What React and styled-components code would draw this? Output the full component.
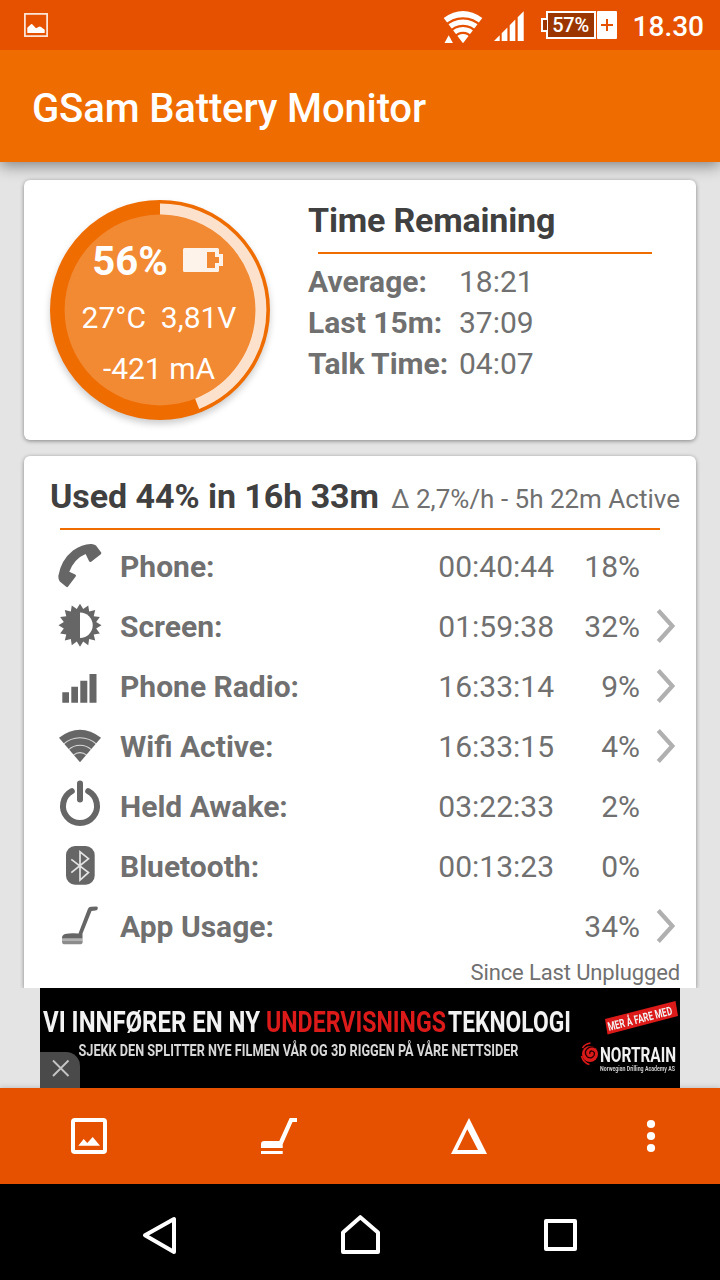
/* eslint-disable react/prop-types */
import React from 'react'
import styled, { createGlobalStyle } from 'styled-components'

const GlobalStyle = createGlobalStyle`
  * {
    box-sizing: border-box;
  }
  body {
    margin: 0;
    background-color: #e4e4e4;
    font-family: Roboto, sans-serif;
  }
`

const Screen = styled.div`
  display: flex;
  flex-direction: column;
  width: 720px;
  height: 1280px;
  overflow: hidden;
`

const StatusBar = styled.header`
  display: flex;
  align-items: center;
  flex: none;
  height: 50px;
  padding: 0 16px 0 24px;
  background-color: #e65100;
  position: relative;
  z-index: 1;
`

const StatusIcons = styled.div`
  display: flex;
  align-items: center;
  margin-left: auto;
`

const BatteryBadge = styled.div`
  display: flex;
  align-items: center;
  height: 28px;
  margin-left: 17px;
`

const BatteryNub = styled.span`
  width: 6px;
  height: 14px;
  margin-right: -1px;
  border: 2px solid #fff;
  border-right: none;
  background-color: #9c3600;
  z-index: 1;
`

const BatteryLevel = styled.span`
  width: 50px;
  height: 28px;
  border: 2px solid #fff;
  background-color: #9c3600;
  color: #fff;
  font-size: 20px;
  font-weight: 500;
  line-height: 25px;
  text-align: center;
  letter-spacing: -0.3px;
`

const BatteryPlus = styled.span`
  display: flex;
  align-items: center;
  justify-content: center;
  width: 20px;
  height: 28px;
  margin-left: 1px;
  border-radius: 1px;
  background-color: #fff;
`

const Clock = styled.span`
  margin-left: 16px;
  padding-top: 3px;
  color: #fff;
  font-size: 28px;
  font-weight: 500;
  line-height: 50px;
`

const AppBar = styled.div`
  flex: none;
  height: 112px;
  padding: 3px 32px 0;
  background-color: #ef6c00;
  box-shadow: 0 4px 14px rgba(0, 0, 0, 0.42);
`

const AppTitle = styled.h1`
  margin: 0;
  color: #fff;
  font-size: 40px;
  font-weight: 500;
  line-height: 112px;
  letter-spacing: -0.13px;
`

const Content = styled.main`
  display: flex;
  flex-direction: column;
  flex: none;
  gap: 16px;
  height: 826px;
  padding: 18px 24px 0;
`

const Card = styled.section`
  flex: none;
  border-radius: 6px;
  background-color: #fff;
  box-shadow: 0 1px 4px rgba(0, 0, 0, 0.42);
`

const SummaryCard = styled(Card)`
  display: flex;
  height: 260px;
  padding: 20px 26px;
`

const UsageCard = styled(Card)`
  height: 532px;
  padding-top: 14px;
  border-radius: 6px 6px 0 0;
  clip-path: inset(-4px -4px 0 -4px);
`

const Gauge = styled.div`
  display: grid;
  flex: none;
  width: 220px;
  height: 220px;
  border-radius: 50%;
  background-color: #ef6c00;
  box-shadow: 0 4px 7px rgba(0, 0, 0, 0.2);

  > * {
    grid-area: 1 / 1;
  }
`

const GaugeText = styled.div`
  display: flex;
  flex-direction: column;
  align-items: center;
  padding: 34px 2px 0 0;
  color: #fff;
  font-size: 30px;
  line-height: 51px;
  white-space: pre;
`

const GaugeLevel = styled.div`
  display: flex;
  align-items: center;
  gap: 15px;
  height: 56px;
  margin: -1px 0 3px -3px;
  font-size: 40px;
  font-weight: 700;

  svg {
    margin-top: -2px;
  }
`

const TimeRemaining = styled.div`
  margin-left: 38px;
  width: 344px;
`

const Heading = styled.h2`
  margin: 0;
  color: #404040;
  font-size: 34px;
  font-weight: 700;
  line-height: 40px;
  letter-spacing: ${(props) => props.$tracking || 'normal'};
`

const Rule = styled.div`
  height: 2px;
  margin: ${(props) => props.$margin};
  background-color: #ef6c00;
`

const Estimates = styled.dl`
  display: grid;
  grid-template-columns: 151px auto;
  margin: 7px 0 0;
  color: #707070;
  font-size: 30px;
  line-height: 41px;

  dt {
    font-weight: 700;
    white-space: nowrap;
  }
  dd {
    margin: 0;
  }
`

const UsageHeader = styled.div`
  display: flex;
  align-items: baseline;
  justify-content: space-between;
  height: 58px;
  padding: 6px 16px 0 26px;
  white-space: nowrap;
`

const UsageRate = styled.span`
  color: #707070;
  font-size: 26px;
`

const UsageRow = styled.div`
  display: grid;
  grid-template-columns: 64px 1fr 130px 86px 56px;
  align-items: center;
  height: 60px;
  padding-left: 32px;
  color: #707070;
  font-size: 30px;
  line-height: 58px;

  svg {
    display: block;
  }
  span {
    padding-top: 2px;
  }
`

const RowLabel = styled.span`
  font-weight: 700;
`

const RowValue = styled.span`
  min-height: 60px;
  text-align: right;
`

const Since = styled.div`
  padding: 1px 16px 0 0;
  color: #707070;
  font-size: 22px;
  letter-spacing: -0.13px;
  line-height: 32px;
  text-align: right;
`

const Banner = styled.aside`
  position: relative;
  flex: none;
  width: 640px;
  height: 100px;
  margin: 0 40px;
  background-color: #000;

  svg {
    display: block;
  }
`

const BannerClose = styled.button`
  position: absolute;
  left: 0;
  bottom: 0;
  width: 40px;
  height: 36px;
  padding: 0;
  border: none;
  border-radius: 0 14px 0 0;
  background-color: #4a4a4a;
`

const Toolbar = styled.nav`
  display: flex;
  align-items: center;
  flex: none;
  gap: 154px;
  height: 96px;
  padding-left: 71px;
  background-color: #e65100;
  box-shadow: 0 0 6px rgba(0, 0, 0, 0.2);
`

const NavBar = styled.nav`
  display: flex;
  align-items: center;
  flex: none;
  gap: 160px;
  height: 96px;
  padding: 6px 0 0 140px;
  background-color: #000;
`

const PictureStatusIcon = () => (
  <svg width="24" height="24" viewBox="0 0 24 24">
    <rect x="0.9" y="0.9" width="22.2" height="22.2" fill="none" stroke="#fff" strokeWidth="1.7" opacity="0.88" />
    <path d="M3.3 14.7 7 11.3q.8-.5 1.5.3L12 15.3l3-1.5q1-.5 2 .3l3.7 2.6V20H3.3z" fill="#fff" />
  </svg>
)

const WifiStatusIcon = () => (
  <svg width="40" height="38" viewBox="0 -4 40 38">
    <path d="M20 33.3.7 7.9Q20-6 39.3 7.9z" fill="#fff" />
    <g fill="none" stroke="#e65100" strokeWidth="2.3">
      <path d="M1.8 16.2a25 25 0 0 1 36.4 0" />
      <path d="M6.400 22.400a17.500 17.500 0 0 1 27.200 0" />
      <path d="M11.600 27.200a10.200 10.200 0 0 1 16.800 0" />
    </g>
    <path d="M5.700 25.200 1.500 33h8.400z" fill="#fff" stroke="#e65100" strokeWidth="3" paintOrder="stroke" />
  </svg>
)

const SignalStatusIcon = styled.svg.attrs({
  viewBox: '0 -2 30 32',
  children: (
    <path d="M0 30 5.7 24.3V30zM7.7 30v-7.7l5.7-5.7V30zM15.7 30V14.3l5.6-5.7V30zM23.7 30V6.3L29.7.3V30z" fill="#fff" />
  )
})`
  width: 30px;
  height: 32px;
  margin-left: 11px;
`

const GaugeRing = () => (
  <svg width="220" height="220" viewBox="0 0 220 220">
    <circle cx="110" cy="110" r="95.4" fill="#f28933" />
    <circle
      cx="110"
      cy="110"
      r="100.9"
      fill="none"
      stroke="#fce2cc"
      strokeWidth="11"
      pathLength="100"
      strokeDasharray="44 56"
      transform="rotate(-90 110 110)"
    />
  </svg>
)

const GaugeBattery = () => (
  <svg width="40" height="24" viewBox="0 0 40 24">
    <path
      d="M1.5 0H34.5Q36 0 36 1.5V6h4v12h-4v4.5Q36 24 34.5 24H1.5Q0 24 0 22.5V1.5Q0 0 1.5 0zM24 4v16h8v-5h4V9h-4V4z"
      fill="#fff"
      fillRule="evenodd"
      opacity="0.9"
    />
  </svg>
)

// 16 pointed sun outline
const sunPoints = Array.from({ length: 32 }, (_, i) => {
  const r = i % 2 === 0 ? 21.5 : 16.5
  const a = (i * Math.PI) / 16
  return `${(24 + r * Math.sin(a)).toFixed(2)},${(29.3 - r * Math.cos(a)).toFixed(2)}`
}).join(' ')

const icons = {
  phone: (
    <path d="M34.7 8q3.300-.2 5.300 1.600l5.200 7q.5.9-.4 1.600l-9.600 7.500q-1.200.8-2.100-.5L29.600 18Q18.500 22.500 13.300 35.700l5.900 2.700q1.400.8.500 2.200l-7.600 10q-.8 1-1.900.2L3.800 45.600Q2.200 44 2.300 40 5 24 17 14.500 26 8.300 34.700 8z" />
  ),
  screen: (
    <>
      <polygon points={sunPoints} />
      <path d="M24 16.600a12.700 12.700 0 0 1 0 25.400z" fill="#fff" />
    </>
  ),
  radio: (
    <path d="M6.300 36.300H13v10.400H6.300zM15.300 30.700H22v16h-6.700zM24.300 24.700h7v22h-7zM33.500 18h7v28.700h-7z" />
  ),
  wifi: (
    <>
      <path d="M24 46.300 3 21.700Q24 5.800 45 21.700z" />
      <g fill="none" stroke="#fff" strokeWidth="1.100" opacity="0.75">
        <path d="M7.500 28.100a24.500 24.500 0 0 1 33 0" />
        <path d="M12.600 33.700a17 17 0 0 1 22.800 0" />
        <path d="M17.500 39.100a9.700 9.700 0 0 1 13 0" />
      </g>
    </>
  ),
  power: (
    <g fill="none" stroke="#666" strokeWidth="6" strokeLinecap="round">
      <path d="M15.800 15.200a17 17 0 1 0 16.400 0" />
      <path d="M24 7.500v16" />
    </g>
  ),
  bluetooth: (
    <>
      <rect x="10" y="10" width="28.700" height="38.700" rx="9" />
      <path d="M15.300 36.700 32.500 22.700 24 15.800V44.200L32.500 36.500 15.300 23.300" fill="none" stroke="#e4e4e4" strokeWidth="1.700" />
    </>
  ),
  apps: (
    <>
      <path d="M22.300 38 32 12.800q.8-2 3-2.100l5.500-.2q1.600 0 1.300 1.800-.2 2.200-2.300 2.300l-4 .3L26.500 37.500V42.500H6q-.3-3.500 3-4.500 6-1.300 13.300-.5z" />
      <path d="M6 42.500h20.700V45H6z" opacity="0.5" />
      <path d="M6 45h20.700q0 3.300-2 3.300H8q-2 0-2-3.300z" opacity="0.75" />
    </>
  )
}

const Chevron = () => (
  <svg width="56" height="60" viewBox="0 0 56 60">
    <path d="M18.300 14.500 32.300 30 18.300 45.500" fill="none" stroke="#b0b0b0" strokeWidth="4.300" />
  </svg>
)

const rows = [
  { icon: 'phone', label: 'Phone:', time: '00:40:44', percent: '18%' },
  { icon: 'screen', label: 'Screen:', time: '01:59:38', percent: '32%', link: true },
  { icon: 'radio', label: 'Phone Radio:', time: '16:33:14', percent: '9%', link: true },
  { icon: 'wifi', label: 'Wifi Active:', time: '16:33:15', percent: '4%', link: true },
  { icon: 'power', label: 'Held Awake:', time: '03:22:33', percent: '2%' },
  { icon: 'bluetooth', label: 'Bluetooth:', time: '00:13:23', percent: '0%' },
  { icon: 'apps', label: 'App Usage:', time: '', percent: '34%', link: true }
]

function UsageItem ({ icon, label, time, percent, link }) {
  return (
    <UsageRow>
      <svg width="48" height="60" viewBox="0 0 48 60" fill="#666">{icons[icon]}</svg>
      <RowLabel>{label}</RowLabel>
      <RowValue>{time}</RowValue>
      <RowValue>{percent}</RowValue>
      {link && <Chevron />}
    </UsageRow>
  )
}

function AdBanner () {
  return (
    <Banner>
      <svg width="640" height="100" viewBox="0 0 640 100" fontFamily="Roboto, sans-serif" fontWeight="700">
        <g filter="blur(0.5px)" fill="#f2f2f2">
          <g fontSize="30">
            <text x="3" y="44" textLength="217" lengthAdjust="spacingAndGlyphs">VI INNFØRER EN NY</text>
            <text x="226" y="44" textLength="180" lengthAdjust="spacingAndGlyphs" fill="#dc1a1a">UNDERVISNINGS</text>
            <text x="408" y="44" textLength="123" lengthAdjust="spacingAndGlyphs">TEKNOLOGI</text>
          </g>
          <text x="38.500" y="68" fontSize="16.500" textLength="440" lengthAdjust="spacingAndGlyphs" fill="#d8d8d8">
            SJEKK DEN SPLITTER NYE FILMEN VÅR OG 3D RIGGEN PÅ VÅRE NETTSIDER
          </text>
          <path d="M565 31 635.500 13 638 28 567.500 46.500z" fill="#dc1a1a" />
          <text x="569" y="43" fontSize="12" textLength="66" lengthAdjust="spacingAndGlyphs" transform="rotate(-14.500 569 43)">
            MER Å FARE MED
          </text>
          <circle cx="550" cy="66" r="8" fill="#dc1a1a" />
          <path d="M550 66q-1-3 2-3 3.500 1 2 4.500-2.500 4-6.500 1.500-4-4-.5-8 4-3.500 8.500-1" fill="none" stroke="#200" strokeWidth="1.300" />
          <path d="M542.500 60q2-4 8-5M541.500 68q2 7 8 8.500" fill="none" stroke="#dc1a1a" strokeWidth="1.600" />
          <text x="560" y="73.500" fontSize="20" textLength="76" lengthAdjust="spacingAndGlyphs">NORTRAIN</text>
          <text x="560" y="83" fontSize="7.500" textLength="75" lengthAdjust="spacingAndGlyphs" fill="#ccc">
            Norwegian Drilling Academy AS
          </text>
        </g>
      </svg>
      <BannerClose aria-label="Close">
        <svg width="40" height="36" viewBox="0 0 40 36">
          <path d="M13 8.500 28.500 24M28.500 8.500 13 24" stroke="#c4c4c4" strokeWidth="1.900" />
        </svg>
      </BannerClose>
    </Banner>
  )
}

function App () {
  return (
    <Screen>
      <GlobalStyle />
      <StatusBar>
        <PictureStatusIcon />
        <StatusIcons>
          <WifiStatusIcon />
          <SignalStatusIcon />
          <BatteryBadge>
            <BatteryNub />
            <BatteryLevel>57%</BatteryLevel>
            <BatteryPlus>
              <svg width="12" height="12" viewBox="0 0 12 12">
                <path d="M6 0v12M0 6h12" stroke="#e65100" strokeWidth="2" />
              </svg>
            </BatteryPlus>
          </BatteryBadge>
          <Clock>18.30</Clock>
        </StatusIcons>
      </StatusBar>
      <AppBar>
        <AppTitle>GSam Battery Monitor</AppTitle>
      </AppBar>

      <Content>
        <SummaryCard>
          <Gauge>
            <GaugeRing />
            <GaugeText>
              <GaugeLevel>
                56%
                <GaugeBattery />
              </GaugeLevel>
              <div>27°C  3,81V</div>
              <div>-421 mA</div>
            </GaugeText>
          </Gauge>
          <TimeRemaining>
            <Heading $tracking="-0.18px">Time Remaining</Heading>
            <Rule $margin="12px 0 0 10px" />
            <Estimates>
              <dt>Average:</dt>
              <dd>18:21</dd>
              <dt>Last 15m:</dt>
              <dd>37:09</dd>
              <dt>Talk Time:</dt>
              <dd>04:07</dd>
            </Estimates>
          </TimeRemaining>
        </SummaryCard>

        <UsageCard>
          <UsageHeader>
            <Heading $tracking="-0.05px">Used 44% in 16h 33m</Heading>
            <UsageRate>Δ 2,7%/h - 5h 22m Active</UsageRate>
          </UsageHeader>
          <Rule $margin="0 36px 6px" />
          {rows.map((row) => <UsageItem key={row.label} {...row} />)}
          <Since>Since Last Unplugged</Since>
        </UsageCard>
      </Content>

      <AdBanner />

      <Toolbar>
        <svg width="36" height="36" viewBox="0 0 36 36">
          <rect x="2" y="2" width="32" height="32" rx="1.800" fill="none" stroke="#fff" strokeWidth="4" />
          <path d="M7.300 27.700 12.700 21l3.600 4L21.700 19 29 27.700z" fill="#fff" />
        </svg>
        <svg width="36" height="36" viewBox="0 0 36 36" fill="#fff">
          <path d="M28.700 0H36v4h-4.500L21.700 26.300V30H0v-3.700Q0 23 3.300 23h15z" />
          <path d="M0 33h21.700v3H0z" />
        </svg>
        <svg width="36" height="36" viewBox="0 0 36 36" fill="#fff">
          <path d="M18 0 36 36H0zM16.300 11.300 6.300 32H27z" fillRule="evenodd" />
        </svg>
        <svg width="20" height="36" viewBox="0 0 20 36" fill="#fff">
          <circle cx="10" cy="6" r="4.100" />
          <circle cx="10" cy="18" r="4.100" />
          <circle cx="10" cy="30" r="4.100" />
        </svg>
      </Toolbar>

      <NavBar>
        <svg width="40" height="40" viewBox="0 0 40 40" fill="none" stroke="#fff" strokeWidth="4" strokeLinejoin="round">
          <path d="M5 20.300 34 4v33z" />
        </svg>
        <svg width="40" height="40" viewBox="0 0 40 40" fill="none" stroke="#fff" strokeWidth="4" strokeLinejoin="round">
          <path d="M3 17.500 20.300 2.200 38 17.500V37H3z" />
        </svg>
        <svg width="40" height="40" viewBox="0 0 40 40" fill="none" stroke="#fff" strokeWidth="4" strokeLinejoin="round">
          <path d="M6 6h29v28H6z" />
        </svg>
      </NavBar>
    </Screen>
  )
}

export default App
